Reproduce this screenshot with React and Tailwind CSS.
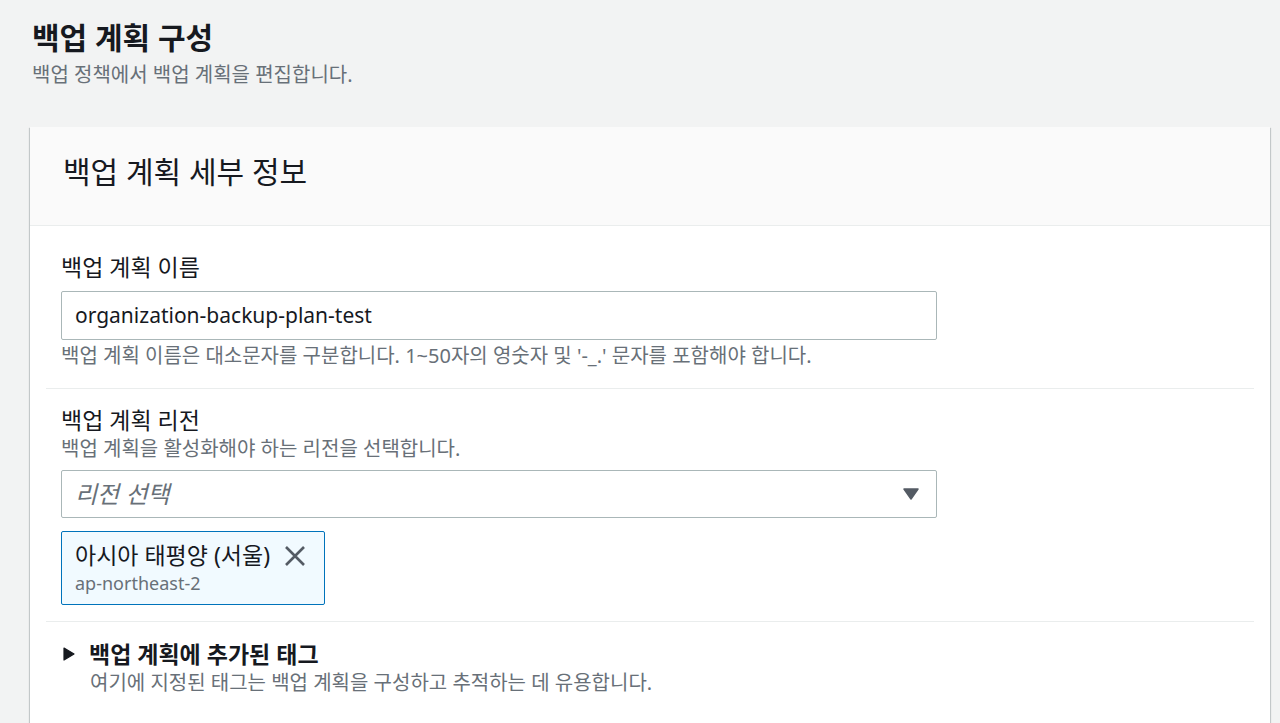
import React from 'react';

const font = { fontFamily: '"Noto Sans", "Noto Sans CJK KR", sans-serif' };

const App = () => {
    return (
        <div className="min-h-[723px] bg-[#f2f3f3] text-[#16191f] overflow-hidden" style={font}>
            {/* Page header */}
            <div className="pl-[32px] pt-[20px]">
                <h1 className="text-[30px] leading-[36px] font-bold text-[#16191f]">백업 계획 구성</h1>
                <p className="mt-[7px] text-[20px] leading-[24px] text-[#687078]">백업 정책에서 백업 계획을 편집합니다.</p>
            </div>

            {/* Card */}
            <div className="ml-[30px] mr-[10px] mt-[40px] bg-white shadow-[0_1px_1px_0_rgba(0,28,36,0.3),1px_1px_1px_0_rgba(0,28,36,0.15),-1px_1px_1px_0_rgba(0,28,36,0.15)]">
                <div className="bg-[#fafafa] border-b border-[#eaeded] pl-[33px] pt-[27px] pb-[35px]">
                    <h2 className="text-[30px] leading-[36px] font-normal text-[#16191f]">백업 계획 세부 정보</h2>
                </div>

                <div className="px-4">
                    {/* Name */}
                    <div className="px-[15px] pt-[27px] pb-[20px] border-b border-[#eaeded]">
                        <label className="block text-[23px] leading-[28px] text-[#16191f]">백업 계획 이름</label>
                        <div className="mt-[10px] w-[876px] h-[49px] border border-[#aab7b8] rounded-[2px] flex items-center px-[13px]">
                            <span className="text-[21px] text-[#16191f]">organization-backup-plan-test</span>
                        </div>
                        <p className="mt-[4px] text-[20px] leading-[24px] text-[#687078]">
                            백업 계획 이름은 대소문자를 구분합니다. 1~50자의 영숫자 및 '-_.' 문자를 포함해야 합니다.
                        </p>
                    </div>

                    {/* Regions */}
                    <div className="px-[15px] pt-[17px] pb-[16px] border-b border-[#eaeded]">
                        <label className="block text-[23px] leading-[28px] text-[#16191f]">백업 계획 리전</label>
                        <p className="mt-[3px] text-[20px] leading-[24px] text-[#687078]">백업 계획을 활성화해야 하는 리전을 선택합니다.</p>
                        <div className="mt-[9px] w-[876px] h-[48px] border border-[#aab7b8] rounded-[2px] flex items-center justify-between pl-[13px] pr-[17px]">
                            <span className="text-[24px] italic text-[#687078]">리전 선택</span>
                            <svg width="16" height="12" viewBox="0 0 16 12">
                                <path d="M1 1h14L8 11z" fill="#545b64" stroke="#545b64" strokeWidth="1.5" strokeLinejoin="round" />
                            </svg>
                        </div>
                        <div className="mt-[13px] inline-flex items-start gap-[14px] border border-[#0073bb] bg-[#f1faff] rounded-[2px] pl-[13px] pr-[18px] pt-[7px] pb-[9px]">
                            <div>
                                <div className="text-[23px] leading-[32px] text-[#16191f]">아시아 태평양 (서울)</div>
                                <div className="text-[18px] leading-[24px] text-[#687078]">ap-northeast-2</div>
                            </div>
                            <svg className="mt-[6px]" width="22" height="22" viewBox="0 0 22 22">
                                <path d="M2 2l18 18M20 2L2 20" stroke="#545b64" strokeWidth="2.6" strokeLinecap="butt" />
                            </svg>
                        </div>
                    </div>

                    {/* Tags */}
                    <div className="pl-[17px] pt-[18px] pb-[40px]">
                        <div className="flex items-center gap-[14px]">
                            <svg width="12" height="14" viewBox="0 0 12 14">
                                <path d="M1 1l10 6-10 6z" fill="#16191f" stroke="#16191f" strokeWidth="1.2" strokeLinejoin="round" />
                            </svg>
                            <span className="text-[23px] leading-[28px] font-bold text-[#16191f]">백업 계획에 추가된 태그</span>
                        </div>
                        <p className="ml-[27px] mt-[3px] text-[20px] leading-[24px] text-[#687078]">여기에 지정된 태그는 백업 계획을 구성하고 추적하는 데 유용합니다.</p>
                    </div>
                </div>
            </div>
        </div>
    );
};

export default App;
